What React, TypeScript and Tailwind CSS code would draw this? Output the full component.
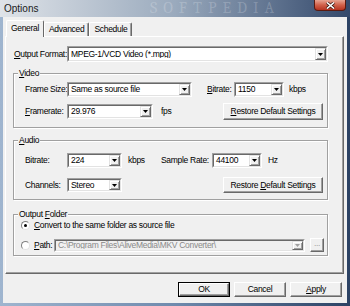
import React from 'react';

const font = { fontFamily: '"Liberation Sans", Arial, sans-serif' };

function Arrow({ disabled }: { disabled?: boolean }) {
  return (
    <svg width="5" height="3" viewBox="0 0 5 3">
      <polygon points="0,0 5,0 2.5,3" fill={disabled ? '#a0a0a0' : '#000'} />
    </svg>
  );
}

// classic sunken combo box with a raised drop button
function Combo({
  value,
  className,
  disabled,
}: {
  value: string;
  className: string;
  disabled?: boolean;
}) {
  return (
    <div
      className={`flex shrink-0 border border-t-[#a0a0a0] border-l-[#a0a0a0] border-r-white border-b-white ${className}`}
    >
      <div
        className={`flex min-w-0 flex-1 items-center border border-t-[#696969] border-l-[#696969] border-r-[#e3e3e3] border-b-[#e3e3e3] ${
          disabled ? 'bg-[#f0f0f0] text-[#8a8a8a]' : 'bg-white text-black'
        }`}
      >
        <span className="min-w-0 flex-1 overflow-hidden whitespace-nowrap pl-[2px] leading-none">{value}</span>
        <div className="flex h-full w-[11px] shrink-0 items-center justify-center border border-t-[#e3e3e3] border-l-[#e3e3e3] border-r-[#696969] border-b-[#696969] bg-[#f0f0f0] shadow-[inset_1px_1px_0_#fff,inset_-1px_-1px_0_#a0a0a0]">
          <Arrow disabled={disabled} />
        </div>
      </div>
    </div>
  );
}

function Button({
  children,
  className,
  disabled,
}: {
  children: React.ReactNode;
  className: string;
  disabled?: boolean;
}) {
  return (
    <div
      className={`flex shrink-0 items-center justify-center whitespace-nowrap border border-t-white border-l-white border-r-[#696969] border-b-[#696969] bg-[#f0f0f0] shadow-[inset_-1px_-1px_0_#a0a0a0] leading-none ${
        disabled ? 'text-[#a0a0a0]' : 'text-black'
      } ${className}`}
    >
      {children}
    </div>
  );
}

function Group({
  legend,
  className,
  children,
}: {
  legend: React.ReactNode;
  className: string;
  children: React.ReactNode;
}) {
  return (
    <fieldset
      className={`w-[315px] border border-[#a0a0a0] shadow-[inset_1px_1px_0_#fff,1px_1px_0_#fff] ${className}`}
    >
      <legend className="ml-[4px] bg-[#f0f0f0] px-[1px] leading-[10px]">{legend}</legend>
      {children}
    </fieldset>
  );
}

function Radio({ checked }: { checked?: boolean }) {
  return (
    <div className="flex h-[9px] w-[9px] shrink-0 items-center justify-center rounded-full border border-t-[#808080] border-l-[#808080] border-r-[#e3e3e3] border-b-[#e3e3e3] bg-white">
      {checked && <div className="h-[3px] w-[3px] rounded-full bg-black" />}
    </div>
  );
}

function Tab({ label, active }: { label: string; active?: boolean }) {
  return active ? (
    <div className="relative z-10 -mb-[1px] flex h-[17px] w-[38px] items-center justify-center rounded-t-[2px] border-t border-l border-r border-t-white border-l-white border-r-[#696969] bg-[#f0f0f0] pb-[1px]">
      {label}
    </div>
  ) : (
    <div className="flex h-[14px] items-center justify-center rounded-t-[2px] border-t border-l border-r border-t-white border-l-white border-r-[#696969] bg-[#f0f0f0] px-[4px] shadow-[inset_-1px_0_0_#a0a0a0]">
      {label}
    </div>
  );
}

export default function App() {
  return (
    <div
      className="relative h-[306px] w-[350px] overflow-hidden whitespace-nowrap bg-gradient-to-r from-[#9fb5cf] via-[#6f8aad] to-[#2c4264] text-[8.5px] tracking-[-0.3px] text-black"
      style={font}
    >
      {/* Title bar */}
      <div className="relative flex h-[17px] items-center bg-gradient-to-r from-[#dfe3e8] via-[#9aaabd] to-[#34496b] pl-[4px]">
        <span className="text-[10px] leading-none tracking-normal text-[#1b1b1b]">Options</span>
        <span className="absolute top-[0px] left-[150px] font-serif text-[16px] leading-none tracking-[6px] text-white/20">
          SOFTPEDIA
        </span>
        <div className="absolute top-0 left-[314px] flex h-[11px] w-[32px] items-center justify-center rounded-b-[4px] border border-t-0 border-[#5a1a10] bg-gradient-to-b from-[#e6a493] via-[#d0604a] to-[#b5321f]">
          <svg width="9" height="7" viewBox="0 0 9 7">
            <path d="M1 0.5 L8 6.5 M8 0.5 L1 6.5" stroke="#3a1a14" strokeWidth="3" />
            <path d="M1 0.5 L8 6.5 M8 0.5 L1 6.5" stroke="#fff" strokeWidth="1.6" />
          </svg>
        </div>
      </div>

      {/* Client area */}
      <div className="mx-[3px] h-[286px] bg-[#f0f0f0] pt-[3px]">
        <div className="flex h-[16px] items-end pl-[3px]">
          <Tab label="General" active />
          <Tab label="Advanced" />
          <Tab label="Schedule" />
        </div>

        <div className="ml-[2px] h-[238px] w-[339px] border border-t-white border-l-white border-r-[#696969] border-b-[#696969] pl-[7px] shadow-[inset_-1px_-1px_0_#a0a0a0]">
          {/* Output format */}
          <div className="mt-[9px] ml-[1px] flex h-[16px] items-center">
            <span className="w-[53px] shrink-0">
              <u>O</u>utput Format:
            </span>
            <Combo value="MPEG-1/VCD Video (*.mpg)" className="h-[16px] w-[261px]" />
          </div>

          {/* Video */}
          <Group legend={<><u>V</u>ideo</>} className="mt-[6px] h-[60px]">
            <div className="mt-[4px] flex h-[15px] items-center pl-[11px]">
              <span className="w-[42px] shrink-0">Frame Size:</span>
              <Combo value="Same as source file" className="h-[15px] w-[125px]" />
              <span className="ml-[15px] w-[27px] shrink-0">
                <u>B</u>itrate:
              </span>
              <Combo value="1150" className="h-[15px] w-[50px]" />
              <span className="ml-[5px]">kbps</span>
            </div>
            <div className="mt-[6px] flex h-[17px] items-center pl-[11px]">
              <span className="w-[42px] shrink-0">
                <u>F</u>ramerate:
              </span>
              <Combo value="29.976" className="h-[15px] w-[86px]" />
              <span className="w-[70px] shrink-0 pl-[8px]">fps</span>
              <Button className="h-[17px] w-[100px]">
                <span>
                  <u>R</u>estore Default Settings
                </span>
              </Button>
            </div>
          </Group>

          {/* Audio */}
          <Group legend={<><u>A</u>udio</>} className="mt-[7px] h-[65px]">
            <div className="mt-[8px] flex h-[15px] items-center pl-[11px]">
              <span className="w-[42px] shrink-0">Bitrate:</span>
              <Combo value="224" className="h-[15px] w-[55px]" />
              <span className="w-[39px] shrink-0 pl-[6px]">kbps</span>
              <span className="w-[51px] shrink-0">Sample Rate:</span>
              <Combo value="44100" className="h-[15px] w-[50px]" />
              <span className="ml-[6px]">Hz</span>
            </div>
            <div className="mt-[9px] flex h-[16px] items-center pl-[11px]">
              <span className="w-[42px] shrink-0">Channels:</span>
              <Combo value="Stereo" className="h-[14px] w-[55px]" />
              <Button className="ml-[101px] h-[16px] w-[100px]">
                <span>
                  Restore <u>D</u>efault Settings
                </span>
              </Button>
            </div>
          </Group>

          {/* Output folder */}
          <Group
            legend={
              <>
                Output <u>F</u>older
              </>
            }
            className="mt-[9px] h-[47px]"
          >
            <div className="flex h-[12px] items-center gap-[4px] pl-[7px]">
              <Radio checked />
              <span>
                <u>C</u>onvert to the same folder as source file
              </span>
            </div>
            <div className="mt-[7px] flex h-[14px] items-center pl-[7px]">
              <Radio />
              <span className="ml-[4px] w-[20px] shrink-0">
                <u>P</u>ath:
              </span>
              <Combo
                value="C:\Program Files\AliveMedia\MKV Converter\"
                className="h-[13px] w-[251px]"
                disabled
              />
              <Button className="ml-[5px] h-[14px] w-[14px] pb-[3px]" disabled>
                ...
              </Button>
            </div>
          </Group>
        </div>

        {/* Dialog buttons */}
        <div className="mt-[8px] flex justify-end gap-[4px] pr-[5px]">
          <div className="h-[15px] w-[52px] border border-black">
            <Button className="h-full w-full">OK</Button>
          </div>
          <Button className="h-[15px] w-[52px]">Cancel</Button>
          <Button className="h-[15px] w-[52px]">
            <span>
              <u>A</u>pply
            </span>
          </Button>
        </div>
      </div>
    </div>
  );
}
